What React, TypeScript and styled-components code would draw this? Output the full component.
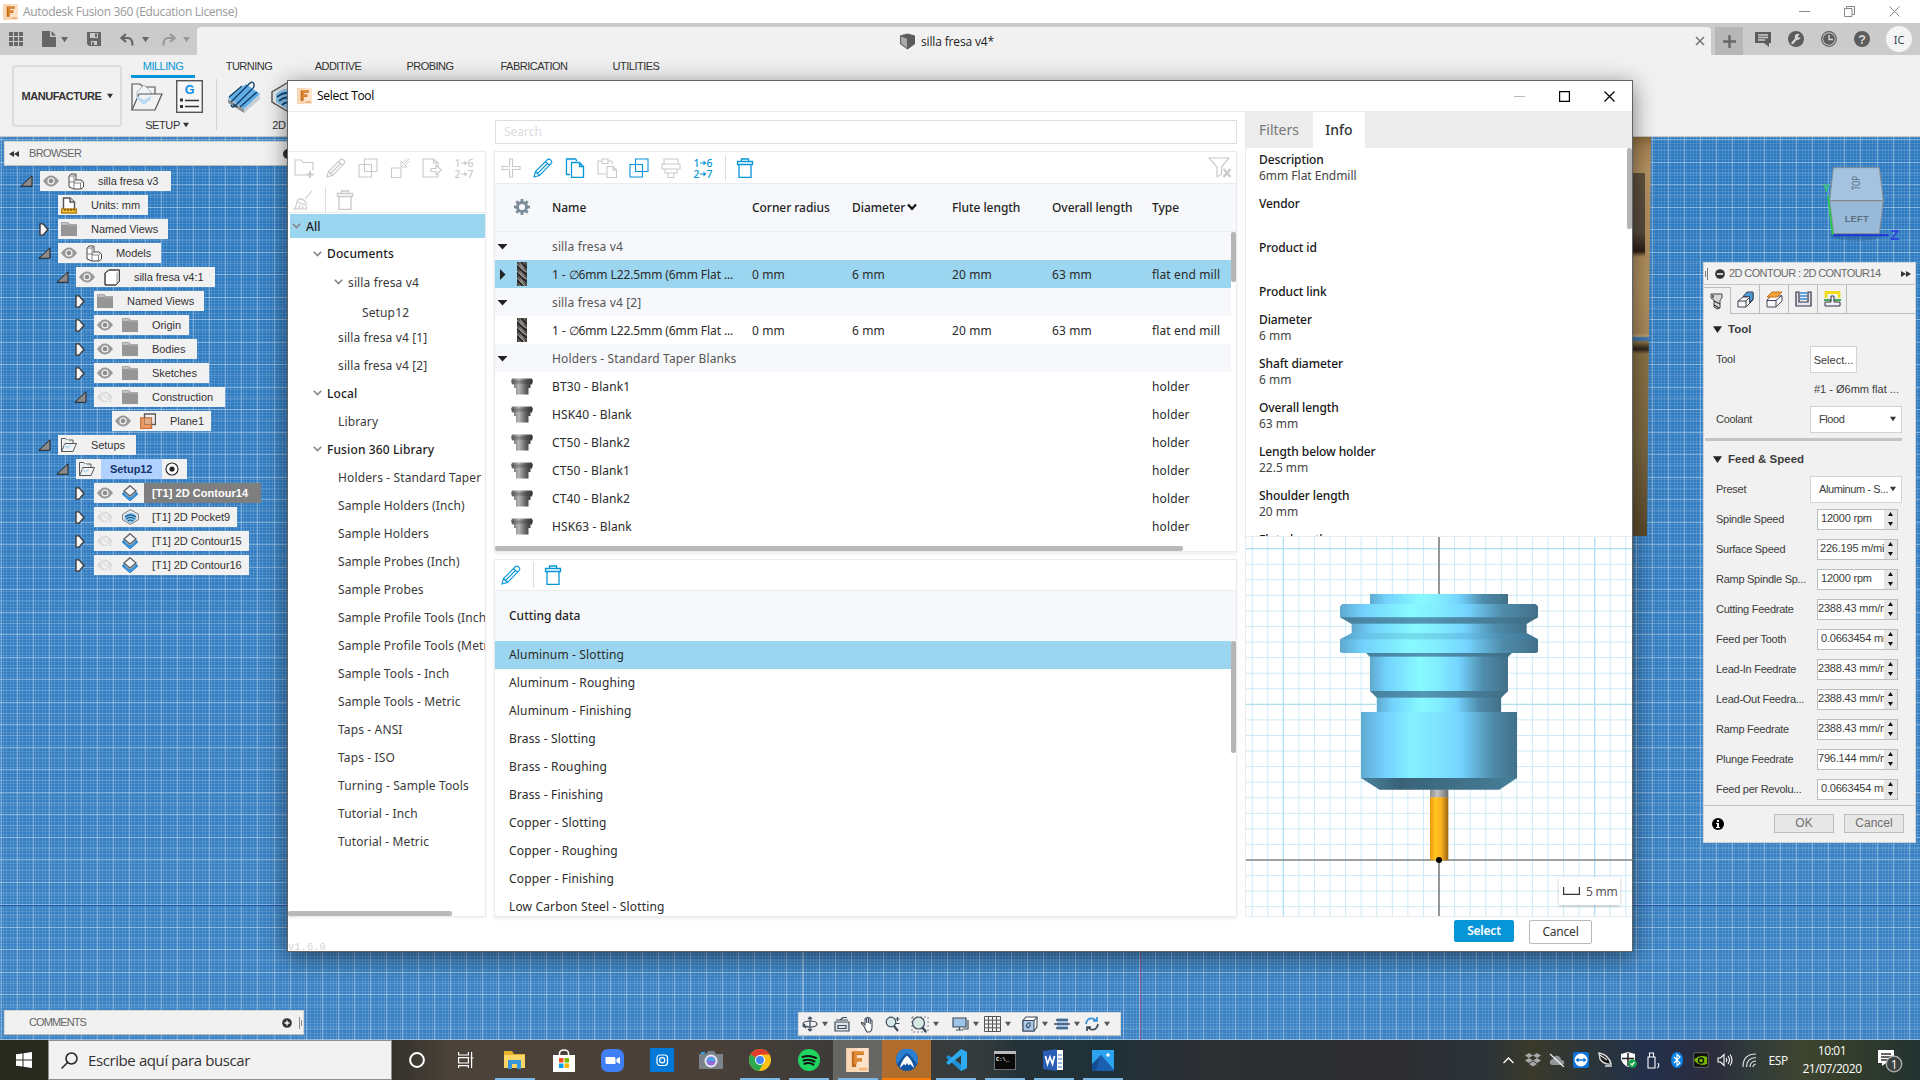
import React from "react";
import styled, { createGlobalStyle, css } from "styled-components";

const ui = `"Noto Sans", "Open Sans", sans-serif`;
const segoe = `"Open Sans", "Noto Sans", sans-serif`;
const classic = `"Liberation Sans", Arial, sans-serif`;
const blue = "#0696d7";

const Global = createGlobalStyle`
  *, *::before, *::after { box-sizing: border-box; }
  html, body { margin: 0; padding: 0; overflow: hidden; }
  svg { display: block; flex: none; }
`;

/* ------------------------------------------------------------------ */
/* Icons                                                               */
/* ------------------------------------------------------------------ */

type IconProps = {
  w?: number;
  h?: number;
  box?: string;
  stroke?: string;
  sw?: number;
  fill?: string;
  children: React.ReactNode;
};

const Icon = ({ w = 24, h = w, box, stroke = "none", sw = 1.4, fill = "none", children }: IconProps) => (
  <svg width={w} height={h} viewBox={box ?? `0 0 ${w} ${h}`} fill={fill} stroke={stroke} strokeWidth={sw}>
    {children}
  </svg>
);

const FusionLogo = ({ size = 15 }: { size?: number }) => (
  <Icon w={size} h={size + 1} box="0 0 32 34">
    <path d="M0 0H32V34H0Z" fill="#fbe2c8" />
    <path d="M0 0H16V34H0Z" fill="#f8cfa6" opacity=".6" />
    <path d="M8 5H25V10H14V14H22V19H14V27H8Z" fill="#c26a1b" />
    <path d="M11 5H25V9H15V14H22V18H15V23H11Z" fill="#e08a35" />
    <path d="M18 28H30V32H18Z" fill="#f2b47c" />
  </Icon>
);

const Caret = ({ c = "#555", s = 7 }: { c?: string; s?: number }) => (
  <Icon w={s} h={s} box="0 0 8 8" fill={c}>
    <path d="M0 1H8L4 7Z" />
  </Icon>
);

const GridDots = () => (
  <Icon w={14} fill="#666">
    {[0, 5, 10].map((y) => [0, 5, 10].map((x) => <rect key={`${x}-${y}`} x={x} y={y} width="4" height="4" />))}
  </Icon>
);
const FileIcon = () => (
  <Icon w={14} h={16} fill="#666">
    <path d="M0 0H8V6H14V16H0ZM9.500 0L14 4.500H9.500Z" />
  </Icon>
);
const SaveIcon = () => (
  <Icon w={14} fill="#666">
    <path fillRule="evenodd" d="M0 0H14V14H2L0 12ZM3 1V6H11V1ZM4 9V13H10V9ZM8 1.500H10V5H8ZM5 10H7V13H5Z" />
  </Icon>
);
const UndoIcon = ({ c, flip }: { c: string; flip?: boolean }) => (
  <Icon w={14} h={13} stroke={c} sw={2.2}>
    <g transform={flip ? "translate(14 0) scale(-1 1)" : undefined}>
      <path d="M6 1L1.500 5L6 9M2 5H8C12 5 12.500 9 12.500 12.500" />
    </g>
  </Icon>
);

const SetupFolder = ({ w = 32, h = 28 }: { w?: number; h?: number }) => (
  <Icon w={w} h={h} box="0 0 32 28" stroke="#555" sw={w > 20 ? 1.2 : 2} fill="none">
    <path d="M1 27V1H9L12 4H24V11" fill="#f4f4f4" />
    <path d="M13 2L20 9V14L13 20L6 14V9Z" fill="#f1f5f8" stroke="#8aa" strokeWidth=".8" />
    <path d="M1 27L8 11H31L24 27Z" fill="#f1f3f5" fillOpacity=".8" />
    <path d="M6 13L13 17L20 13V16L13 22L6 16Z" fill="#b9dcf4" stroke="none" />
  </Icon>
);
const PostIcon = () => (
  <Icon w={27} h={33} stroke="#555">
    <rect x=".7" y=".7" width="25.600" height="31.600" fill="#f7f7f7" />
    <text x="13.500" y="14" fontFamily={classic} fontSize="12.500" fontWeight="700" fill="#0b8ee6" stroke="none" textAnchor="middle">
      G
    </text>
    <path d="M4 18.500H7V21.500H4ZM4 25H7V28H4Z" fill="#333" stroke="none" />
    <path d="M9 20.500H23M9 26.500H23" stroke="#333" />
  </Icon>
);
const Adaptive2D = () => (
  <Icon w={32} h={32}>
    <path d="M0 18L16 28V32L0 22Z" fill="#8f9499" />
    <path d="M16 28L32 14V18L16 32Z" fill="#c9cdd1" />
    <path d="M0 17L18 3L32 13L16 28Z" fill="#62aee6" />
    <g stroke="#0d3c63" strokeWidth="1.300" fill="none">
      <path d="M3 21L20 4Q24 -1 26 3Q27 6 23 9L8 24" />
      <path d="M8 24Q4 28 3 24M12 26L29 11" />
      <path d="M1 16L14 5M5 23L9 26" />
    </g>
  </Icon>
);
const Pocket2D = ({ w = 32, h = 30 }: { w?: number; h?: number }) => (
  <Icon w={w} h={h} box="0 0 32 30" stroke="#555" sw={1.4}>
    <path d="M16 1L31 10V20L16 29L1 20V10Z" fill="#e9eaec" />
    <path d="M5 12Q16 2 27 12V20L16 27L5 20Z" fill="#8cc7ef" stroke="none" />
    <path d="M6 15Q16 7 26 15M8 19Q16 12 24 19M11 23Q16 18 21 23" stroke="#0f4c7d" strokeWidth="2" />
  </Icon>
);
const CubeDoc = () => (
  <Icon w={17} h={17}>
    <path d="M1 2.500L8.500 0.500L16 2.500V11L8.500 16.500L1 11Z" fill="#5c5c5c" />
    <path d="M2 3.600L8 5.800V15L2 10.500Z" fill="#a9a9a9" />
  </Icon>
);

/* Browser tree */
const Eye = () => (
  <Icon w={16} h={12}>
    <path d="M0 6Q8-5 16 6Q8 17 0 6Z" fill="#999" />
    <circle cx="8" cy="6" r="3.600" fill="#f1f1f1" />
    <circle cx="8" cy="6" r="2.300" fill="#8d8d8d" />
  </Icon>
);
const EyeOff = () => (
  <Icon w={16} h={12}>
    <path d="M0 6Q8-5 16 6Q8 17 0 6Z" fill="#dcdcdc" />
    <circle cx="8" cy="6" r="3.400" fill="#f1f1f1" />
    <path d="M2 0L14 12" stroke="#f1f1f1" strokeWidth="3" />
    <path d="M2.500 0L14.500 11.500" stroke="#dcdcdc" strokeWidth="1.200" />
  </Icon>
);
const FolderSolid = () => (
  <Icon w={16} h={14}>
    <path d="M0 0H7L9 2H16V4H0Z" fill="#a8a8a8" />
    <path d="M0 2.500H7L9 4H16V14H0Z" fill="#969696" />
    <path d="M1 2H7" stroke="#eee" strokeWidth=".8" />
  </Icon>
);
const Assembly = () => (
  <Icon w={16} h={17} stroke="#444" sw={1}>
    <path d="M1 3L3 1H8L8 7L13 7L15.500 9V14L13 16H6L1 14Z" fill="#fff" />
    <path d="M1 3H6V9H1M6 3L8 1M6 9V16M6 10H12.500V16M12.500 10L15 8M6 9L8 7" stroke="#777" strokeWidth=".9" />
  </Icon>
);
const BodyCube = () => (
  <Icon w={17} h={17} stroke="#444" sw={1}>
    <path d="M1 4L5 1H15.500V12L12 16H1Z" fill="#fff" />
    <path d="M12 4.500L15.500 1V12L12 16Z" fill="#c9c9c9" stroke="none" />
    <path d="M1 4L5 1H15.500V12L12 16H1Z" />
  </Icon>
);
const UnitsDoc = () => (
  <Icon w={16} h={17}>
    <path d="M2.500 12V1H9L13.500 5V12" fill="#fff" stroke="#555" />
    <path d="M9 1V5H13.500" stroke="#555" fill="#ddd" />
    <rect x=".5" y="12" width="15" height="4" fill="#f5c542" stroke="#b07c10" />
    <path d="M4 12V14M7 12V14M10 12V14M13 12V14" stroke="#805600" />
  </Icon>
);
const PlaneIcon = () => (
  <Icon w={16} h={16}>
    <rect x="4.500" y="1" width="11" height="10.500" stroke="#555" fill="#f1f1f1" />
    <rect x=".5" y="5" width="11" height="10.500" fill="#e8935a" fillOpacity=".9" stroke="#d0713a" />
    <rect x="4.500" y="5" width="7" height="6.500" fill="#e0ab86" stroke="#a66a40" strokeWidth=".7" />
  </Icon>
);
const Contour = () => (
  <Icon w={16} h={16}>
    <path d="M.5 9L8 15.500L15.500 9L8 5Z" fill="#cfe7f8" stroke="#2b87cf" />
    <path d="M.8 7.500L8 13.500L15.200 7.500" stroke="#2b87cf" />
    <path d="M8 .7L14 6L8 11L2 6Z" fill="#f7f7f7" stroke="#666" />
  </Icon>
);
const ArrowOpen = () => (
  <Icon w={13} h={12}>
    <path d="M12 .8V11.300H.8Z" fill="#8b8b8b" stroke="#222" strokeWidth="1" />
  </Icon>
);
const ArrowClosed = () => (
  <Icon w={10} h={13}>
    <path d="M1 .8L4 .8L9 6.500L4 12.200H1Z" fill="#f5f5f5" stroke="#333" strokeWidth="1.300" />
  </Icon>
);

/* Dialog toolbar, drawn on a 20 unit field */
const T = ({ c, children }: { c: string; children: React.ReactNode }) => (
  <Icon w={20} stroke={c} sw={1.1}>
    {children}
  </Icon>
);
const off = "#c9c9c9";
const TNewFolder = ({ c = off }) => (
  <T c={c}>
    <path d="M13 17H1V2H7L9 4.500H19V12" />
    <path d="M16 13V20M12.500 16.500H19.500" strokeWidth="2" />
  </T>
);
const TPencil = ({ c = off }) => (
  <T c={c}>
    <path d="M1 19L2.500 13.500L14.500 1.500Q16 .5 17.800 2.200Q19.500 4 18.300 5.500L6.500 17.500ZM2.500 13.500L6.500 17.500M12.500 3.500L16.500 7.500M4.500 15.500L14.500 5.500" />
  </T>
);
const TDup = ({ c = off }) => (
  <T c={c}>
    <path d="M6.500 1H19V13.500H6.500ZM13.500 13.500V19H1V6.500H6.500M6.500 6.500H13.500V13.500" />
  </T>
);
const TImport = ({ c = off }) => (
  <T c={c}>
    <path d="M1.500 10H11V19.500H1.500Z" />
    <path d="M19 1L14.500 5.500M17 .5L13 4.500M19.500 3L15.500 7M11 3V9H17L14 6Z" strokeWidth=".9" />
  </T>
);
const TExport = ({ c = off }) => (
  <T c={c}>
    <path d="M16 8V5L11.500 1H1V19H16V16M11.500 1V5H16M9 10.500H14V7.500L19.500 12L14 16.500V13.500H9Z" />
  </T>
);
const TRenum = ({ c = off }) => (
  <Icon w={20} h={22} box="1 0 20 22">
    <g fill={c} fontFamily={ui} fontSize="10.500" fontWeight="500">
      <text x="1.500" y="9.500">1</text>
      <text x="14.500" y="9.500">6</text>
      <text x="1.500" y="20.500">2</text>
      <text x="14.500" y="20.500">7</text>
    </g>
    <path d="M8 6H13M8 17H13" stroke={c} strokeWidth="1.200" />
    <path d="M11.500 3.500L14.500 6L11.500 8.500ZM11.500 14.500L14.500 17L11.500 19.500Z" fill={c} />
  </Icon>
);
const TBroom = ({ c = off }) => (
  <T c={c}>
    <path d="M19 1L12 9M6 9Q10 8 13 13L13.500 19H1Q3 17 3.500 14Q4 10 6 9ZM5 12L12 15M5 19Q7 17 7 15M9 19Q10 17 10 16" />
  </T>
);
const TTrash = ({ c = off }) => (
  <T c={c}>
    <path d="M4 6.500V19.500H16V6.500M2.500 3.500H17.500V6.500H2.500ZM6.500 3.500V1H13.500V3.500" strokeWidth="1.300" />
  </T>
);
const TPlus = ({ c = off }) => (
  <T c={c}>
    <path d="M8.500 1H11.500V8.500H19V11.500H11.500V19H8.500V11.500H1V8.500H8.500Z" />
  </T>
);
const TCopy = ({ c = off }) => (
  <T c={c}>
    <path d="M5 16.500H1.500V1H10.500L12 3M6.500 4.500H14.500L18.500 8.500V19.500H6.500ZM14.500 4.500V8.500H18.500" strokeWidth="1.300" />
  </T>
);
const TPaste = ({ c = off }) => (
  <T c={c}>
    <path d="M9 16H1V3H5V1H11V3H15V6M5 3V5.500H11V3M10 8.500H16L19.500 12V19.500H10ZM16 8.500V12H19.500" />
  </T>
);
const TPrint = ({ c = off }) => (
  <T c={c}>
    <path d="M3 1H17V6H3ZM1 6H19V11H1ZM4 11V15H16V11M7 15V19.500H13V15" />
  </T>
);
const TFilter = ({ c = off }) => (
  <Icon w={24} h={22} stroke={c} sw={1.2}>
    <path d="M1 1H21L13.500 10V17L9 20V10Z" />
    <path d="M15.500 12L22.500 20M22.500 12L15.500 20" strokeWidth="2.200" />
  </Icon>
);
const Gear = () => (
  <Icon w={16}>
    <circle cx="8" cy="8" r="4.600" stroke="#7c8c99" strokeWidth="3" />
    {[0, 45, 90, 135, 180, 225, 270, 315].map((a) => (
      <rect key={a} x="6.600" y="0" width="2.800" height="3" fill="#7c8c99" transform={`rotate(${a} 8 8)`} />
    ))}
  </Icon>
);
const ChevronDown = () => (
  <Icon w={9} h={6} stroke="#888" sw={1.6}>
    <path d="M.8 .8L4.500 4.600L8.200 .8" />
  </Icon>
);
const MillImage = () => (
  <Icon w={10} h={24}>
    <defs>
      <linearGradient id="mill">
        <stop offset="0" stopColor="#3a3836" />
        <stop offset=".45" stopColor="#8d8986" />
        <stop offset="1" stopColor="#44413f" />
      </linearGradient>
    </defs>
    <rect width="10" height="24" fill="url(#mill)" />
    <path d="M0 4L6 10L10 13M0 11L6 17L10 20M0 18L6 24M4 0L10 6" stroke="#292726" strokeWidth="1.900" />
    <path d="M0 2L5 7L10 10M0 9L5 14L10 17M0 16L5 21L8 24" stroke="#b3aeaa" strokeWidth=".8" />
  </Icon>
);
const HolderImage = () => (
  <Icon w={22} h={17}>
    <defs>
      <linearGradient id="hold">
        <stop offset="0" stopColor="#5a5a5a" />
        <stop offset=".35" stopColor="#b5b5b5" />
        <stop offset=".7" stopColor="#5b5b5b" />
        <stop offset="1" stopColor="#333" />
      </linearGradient>
    </defs>
    <path d="M1 .5H21L21.500 2.500H22L21 6.500H19.500V10H17.500V16.500H5V10H3V6.500H1L0 2.500H.5Z" fill="url(#hold)" />
    <path d="M1 3.200H21M1 5H21" stroke="#333" strokeOpacity=".7" strokeWidth=".7" />
  </Icon>
);

/* ------------------------------------------------------------------ */
/* Application frame                                                   */
/* ------------------------------------------------------------------ */

const Screen = styled.div`
  position: relative;
  display: flex;
  flex-direction: column;
  width: 1920px;
  height: 1080px;
  overflow: hidden;
  background: #f1f1f1;
  font: 12px ${ui};
  color: #333;
  white-space: nowrap;
`;

const TitleBar = styled.header`
  display: flex;
  align-items: center;
  flex: none;
  height: 23px;
  padding-left: 3px;
  background: #fff;
`;
const AppTitle = styled.span`
  flex: 1;
  margin-left: 5px;
  color: #999;
  font: 12px/22px ${segoe};
  letter-spacing: -0.32px;
`;
const WindowButtons = styled.div<{ $pad: number }>`
  display: flex;
  align-items: center;
  gap: 34px;
  padding-right: ${(p) => p.$pad}px;
`;

const TabStrip = styled.div`
  display: flex;
  flex: none;
  height: 32px;
  background: #cbcbcb;
`;
const QuickTools = styled.div`
  display: flex;
  align-items: center;
  width: 197px;
  padding-left: 9px;
`;
const Spacer = styled.i<{ $w: number }>`
  flex: none;
  width: ${(p) => p.$w}px;
`;
const DocTab = styled.div`
  display: flex;
  align-items: center;
  width: 1514px;
  margin-top: 4px;
  padding: 0 6px 0 702px;
  gap: 5px;
  background: #f1f1f1;
  border-radius: 4px 4px 0 0;
  color: #222;
  font: 12px ${segoe};
  letter-spacing: -0.15px;

  span { flex: 1; }
`;
const NewTab = styled.div`
  display: grid;
  place-items: center;
  width: 28px;
  margin: 4px 8px 0 4px;
  background: #b7b7b7;
`;
const AccountTools = styled.div`
  display: flex;
  align-items: center;

  > * { width: 33px; display: grid; place-items: center; }
  > :first-child { width: 24px; margin-right: 4px; }
`;
const Avatar = styled.b`
  && { width: 26px; }
  height: 26px;
  margin: 0 0 0 8px;
  border-radius: 50%;
  background: #f4f4f4;
  color: #345;
  font: 11px ${ui};
`;

const Ribbon = styled.div`
  display: flex;
  flex: none;
  height: 82px;
  padding: 0 0 0 12px;
  background: #f1f1f1;
  border-bottom: 1px solid #c9c9c9;
`;
const Workspace = styled.div`
  display: flex;
  align-items: center;
  justify-content: center;
  gap: 5px;
  width: 110px;
  height: 62px;
  margin-top: 10px;
  border: 2px solid #dcdcdc;
  border-radius: 4px;
  font: 700 11px ${classic};
  letter-spacing: -0.45px;
  color: #333;
`;
const RibbonBody = styled.div`
  display: flex;
  flex-direction: column;
  margin-left: 9px;
`;
const RibbonTabs = styled.nav`
  display: flex;
  height: 25px;
`;
const RibbonTab = styled.a<{ $w: number; $on?: boolean }>`
  width: ${(p) => p.$w}px;
  padding-top: 4px;
  text-align: center;
  font: 11px/14px ${classic};
  letter-spacing: -0.5px;
  color: ${(p) => (p.$on ? blue : "#333")};
  border-bottom: 3px solid ${(p) => (p.$on ? blue : "transparent")};
`;
const RibbonGroups = styled.div`
  display: flex;
  padding-top: 1px;
`;
const RibbonGroup = styled.div<{ $w: number; $gap: number }>`
  display: flex;
  flex-direction: column;
  align-items: center;
  width: ${(p) => p.$w}px;

  > :first-child { gap: ${(p) => p.$gap}px; }
`;
const RibbonIcons = styled.div`
  display: flex;
  align-items: center;
  height: 35px;
`;
const RibbonLabel = styled.span`
  display: flex;
  align-items: center;
  gap: 3px;
  height: 22px;
  font: 11px/14px ${classic};
  letter-spacing: -0.4px;
`;
const RibbonRule = styled.i`
  width: 1px;
  height: 51px;
  margin: 0 11px 0 13px;
  background: #d2d2d2;
`;

/* ------------------------------------------------------------------ */
/* Viewport                                                            */
/* ------------------------------------------------------------------ */

const Viewport = styled.main`
  position: relative;
  flex: 1;
  overflow: hidden;
  background:
    linear-gradient(#1d55b8, #1d55b8) 0 768px / 100% 1px no-repeat,
    repeating-linear-gradient(90deg, rgba(255,255,255,.32) 0 1px, transparent 1px 16.03px) 1px 0,
    repeating-linear-gradient(0deg, rgba(255,255,255,.24) 0 1px, transparent 1px 22.5px),
    repeating-linear-gradient(0deg, rgba(255,255,255,.14) 0 1px, transparent 1px 11.25px),
    repeating-linear-gradient(90deg, rgba(255,255,255,.11) 0 1px, transparent 1px 3.2px),
    repeating-linear-gradient(0deg, rgba(255,255,255,.11) 0 1px, transparent 1px 3.2px),
    linear-gradient(#2d7ac0, #3a82c4);
`;
const Photo = styled.div`
  position: absolute;
  left: 1600px;
  top: 0;
  width: 51px;
  height: 399px;
  background:
    linear-gradient(#61533e 0, #584b3d 60px, #2d1d16 78px, rgba(60, 40, 25, 0) 84px) 0 36px / 45px 84px no-repeat,
    linear-gradient(
      #8b6a3c 0, #a88455 12px, #b79565 34px, #b08e5e 110px, #b39261 150px,
      #a98a5a 196px, #c0a475 199px, #3d79b3 201px, #3d79b3 203px, #8c7347 205px, #2b2118 212px, #8c7347 217px,
      #7e6a43 300px, #5d4b2c 399px
    );
  clip-path: polygon(0 0, 100% 0, 92% 100%, 0 100%);
`;
const RedAxis = styled.i`
  position: absolute;
  left: 1140px;
  top: 810px;
  width: 1px;
  height: 93px;
  background: #8b5a8e;
`;
const FloatBar = styled.div<{ $x: number; $y: number; $w: number; $h?: number }>`
  position: absolute;
  left: ${(p) => p.$x}px;
  top: ${(p) => p.$y}px;
  display: flex;
  align-items: center;
  width: ${(p) => p.$w}px;
  height: ${(p) => p.$h ?? 25}px;
  background: #f1f1f1;
  border: 1px solid #d4d4d4;
  border-bottom-color: #bbb;
  color: #666;
  font: 11px ${classic};
`;
const BarLabel = styled.span<{ $ls?: number }>`
  flex: 1;
  padding-bottom: 1px;
  letter-spacing: ${(p) => p.$ls ?? -0.2}px;
`;
const Tree = styled.ul`
  position: absolute;
  left: 16px;
  top: 34px;
  margin: 0;
  padding: 0;
  display: flex;
  flex-direction: column;
  gap: 4px;
  list-style: none;
`;
const TreeRow = styled.li<{ $depth: number }>`
  display: flex;
  height: 20px;
  padding-left: ${(p) => p.$depth * 18}px;
`;
const TreeArrow = styled.span`
  display: grid;
  place-items: center;
  width: 24px;
  padding-right: 4px;
`;
const TreeBox = styled.span<{ $w: number }>`
  display: flex;
  align-items: center;
  width: ${(p) => p.$w}px;
  background: #f1f1f1;
  font: 11px/20px ${classic};
  color: #333;
`;
const TreeCell = styled.span`
  display: grid;
  place-items: center;
  width: 22px;

  & + & { margin-left: 3px; }
`;
const TreeText = styled.span<{ $tone?: "edit" | "active" }>`
  padding-left: 11px;
  letter-spacing: -0.05px;
  ${(p) =>
    p.$tone === "edit" &&
    css`
      width: 61px;
      margin: 0 3px;
      padding-left: 9px;
      font-weight: 700;
      color: #17346b;
      background: #b1d1ff;
    `}
  ${(p) =>
    p.$tone === "active" &&
    css`
      flex: 1;
      margin-left: 3px;
      padding-left: 8px;
      font-weight: 700;
      letter-spacing: 0.05px;
      color: #fff;
      background: #7f7f7f;
    `}
`;

type Node = {
  d: number;
  w: number;
  t: string;
  open?: boolean;
  leaf?: boolean;
  eye?: "on" | "off";
  icon: React.ReactNode;
  tone?: "edit" | "active";
};
const nodes: Node[] = [
  { d: 0, w: 131, t: "silla fresa v3", open: true, eye: "on", icon: <Assembly /> },
  { d: 1, w: 90, t: "Units: mm", leaf: true, icon: <UnitsDoc /> },
  { d: 1, w: 110, t: "Named Views", icon: <FolderSolid /> },
  { d: 1, w: 103, t: "Models", open: true, eye: "on", icon: <Assembly /> },
  { d: 2, w: 139, t: "silla fresa v4:1", open: true, eye: "on", icon: <BodyCube /> },
  { d: 3, w: 110, t: "Named Views", icon: <FolderSolid /> },
  { d: 3, w: 95, t: "Origin", eye: "on", icon: <FolderSolid /> },
  { d: 3, w: 103, t: "Bodies", eye: "on", icon: <FolderSolid /> },
  { d: 3, w: 115, t: "Sketches", eye: "on", icon: <FolderSolid /> },
  { d: 3, w: 131, t: "Construction", open: true, eye: "off", icon: <FolderSolid /> },
  { d: 4, w: 99, t: "Plane1", leaf: true, eye: "on", icon: <PlaneIcon /> },
  { d: 1, w: 78, t: "Setups", open: true, icon: <SetupFolder w={16} h={14} /> },
  { d: 2, w: 111, t: "Setup12", open: true, icon: <SetupFolder w={16} h={14} />, tone: "edit" },
  { d: 3, w: 167, t: "[T1] 2D Contour14", eye: "on", icon: <Contour />, tone: "active" },
  { d: 3, w: 143, t: "[T1] 2D Pocket9", eye: "off", icon: <Pocket2D w={17} h={16} /> },
  { d: 3, w: 155, t: "[T1] 2D Contour15", eye: "off", icon: <Contour /> },
  { d: 3, w: 155, t: "[T1] 2D Contour16", eye: "off", icon: <Contour /> },
];

const BrowserTree = () => (
  <Tree>
    {nodes.map((n, i) => (
      <TreeRow key={i} $depth={n.d}>
        <TreeArrow>{!n.leaf && (n.open ? <ArrowOpen /> : <ArrowClosed />)}</TreeArrow>
        <TreeBox $w={n.w}>
          {n.eye && <TreeCell>{n.eye === "on" ? <Eye /> : <EyeOff />}</TreeCell>}
          <TreeCell>{n.icon}</TreeCell>
          <TreeText $tone={n.tone}>{n.t}</TreeText>
          {n.tone === "edit" && (
            <Icon w={14}>
              <circle cx="7" cy="7" r="6" stroke="#333" strokeWidth="1.200" fill="#fff" />
              <circle cx="7" cy="7" r="2.600" fill="#222" />
            </Icon>
          )}
        </TreeBox>
      </TreeRow>
    ))}
  </Tree>
);

const CubeHolder = styled.div`
  position: absolute;
  left: 1818px;
  top: 24px;
`;
const ViewCube = () => (
  <CubeHolder>
    <svg width="90" height="90" viewBox="534 92 270 270">
      <ellipse cx="650" cy="315" rx="80" ry="16" fill="#1b4f86" opacity=".35" />
      <path d="M580 112H718L730 211H569Z" fill="#a3c3e0" stroke="#8a8f95" strokeWidth="3" />
      <path d="M569 211H730L718 310H581Z" fill="#98b9d8" stroke="#8a8f95" strokeWidth="3" />
      <path d="M569 211H730" stroke="#808890" strokeWidth="3" />
      <path d="M564 196L578 314" stroke="#27d04a" strokeWidth="5" />
      <path d="M580 315H746" stroke="#1b37d6" strokeWidth="6" />
      <g fontFamily={classic} fontWeight="700">
        <text x="650" y="276" textAnchor="middle" fontSize="28" fill="#5b7083" textLength="72">LEFT</text>
        <text transform="translate(661 158) rotate(-90)" textAnchor="middle" fontSize="32" fontWeight="400" fill="#5b7083" textLength="42" lengthAdjust="spacingAndGlyphs">TOP</text>
        <text x="549" y="186" fontSize="34" fontWeight="700" fill="#2fcf6a" textLength="20" lengthAdjust="spacingAndGlyphs">Y</text>
        <text x="751" y="329" fontSize="44" fill="#2c45e0" fontWeight="700">Z</text>
      </g>
    </svg>
  </CubeHolder>
);

/* Navigation bar */
const NavCell = styled.span<{ $w: number }>`
  display: flex;
  align-items: center;
  gap: 4px;
  width: ${(p) => p.$w}px;
`;
const nk = "#3d4a5a";
const NavBar = () => (
  <FloatBar $x={798} $y={875} $w={323} $h={24}>
    <Spacer $w={3} />
    <NavCell $w={32}>
      <Icon w={16} stroke={nk} sw={1.2}>
        <path d="M8 1V15M6 3L8 1L10 3M6 13L8 15L10 13" />
        <ellipse cx="8" cy="8" rx="7" ry="3" />
        <path d="M3 8L1 10L4 12" />
      </Icon>
      <Caret s={6} />
    </NavCell>
    <NavCell $w={26}>
      <Icon w={17} h={16} stroke={nk} sw={1.2}>
        <path d="M1 6H15V15H1Z" fill="#dfe4ea" />
        <path d="M4 9.500H12V12.500H4ZM2 4H14M6 4L9 1.500H13" />
      </Icon>
    </NavCell>
    <NavCell $w={25}>
      <Icon w={16} h={17} stroke={nk} sw={1.1}>
        <path d="M4.500 11L1.500 7.500Q1 6 2.500 6.500L5 9V3Q5.800 1.800 6.600 3V7V2Q7.500 .6 8.400 2V7V2.500Q9.300 1.300 10.200 2.500V8V4.500Q11.200 3.500 12 4.500V11Q12 15 9.500 16H7Q5.500 14 4.500 11Z" fill="#fff" />
      </Icon>
    </NavCell>
    <NavCell $w={26}>
      <Icon w={17} h={16} stroke={nk} sw={1.2}>
        <circle cx="6" cy="6" r="4.800" fill="#d5e8ea" />
        <path d="M9 10L13 15" strokeWidth="2.200" />
        <path d="M12.500 1V5M10.500 3H14.500M11 7.500H14.500" />
      </Icon>
    </NavCell>
    <NavCell $w={41}>
      <Icon w={18} h={17} stroke={nk} sw={1.2}>
        <path d="M1 1H17V16H1Z" strokeDasharray="2 2" stroke="#777" strokeWidth=".9" />
        <circle cx="7.500" cy="7" r="6" fill="#d5e8e0" />
        <path d="M11.500 11.500L15 16" strokeWidth="2.400" />
      </Icon>
      <Caret s={6} />
    </NavCell>
    <NavCell $w={32}>
      <Icon w={17} h={15} stroke={nk} sw={1.2}>
        <path d="M1 1H14V10H1Z" fill="#9cc3e8" />
        <path d="M4 13H11M7.500 10V13M16 3V12H11" />
      </Icon>
      <Caret s={6} />
    </NavCell>
    <NavCell $w={38}>
      <Icon w={17} h={16} stroke="#555" sw={1}>
        <path d="M.5 .5H16.500V15.500H.5ZM.5 4.200H16.500M.5 8H16.500M.5 11.800H16.500M4.500 .5V15.500M8.500 .5V15.500M12.500 .5V15.500" />
      </Icon>
      <Caret s={6} />
    </NavCell>
    <NavCell $w={32}>
      <Icon w={16} h={16} stroke={nk} sw={1.1}>
        <path d="M1 4.500L4 1H15V11L12 15H1Z" fill="#fff" />
        <path d="M1 4.500H12V15H1Z" fill="#a9c9ea" />
        <path d="M12 4.500L15 1M4 10L6 7H8V10L6 12Z" />
      </Icon>
      <Caret s={6} />
    </NavCell>
    <NavCell $w={30}>
      <Icon w={16} h={14} stroke={nk} sw={1.6}>
        <path d="M3 1H14V13H3Z" fill="#9cc3e8" stroke="none" />
        <path d="M2 3H14M0 7H16M2 11H14" />
      </Icon>
      <Caret s={6} />
    </NavCell>
    <NavCell $w={28}>
      <Icon w={16} h={16} stroke="#2f8fd8" sw={1.7}>
        <path d="M2 8Q3 1.500 9 2.500L13 5M13 1V5H9" />
        <path d="M14 8Q13 14.500 7 13.500L3 11M3 15V11H7" stroke={nk} />
      </Icon>
      <Caret s={6} />
    </NavCell>
  </FloatBar>
);

/* ------------------------------------------------------------------ */
/* Operation panel                                                     */
/* ------------------------------------------------------------------ */

const Panel = styled.aside`
  position: absolute;
  left: 1703px;
  top: 125px;
  display: flex;
  flex-direction: column;
  width: 213px;
  height: 581px;
  background: #f1f1f1;
  border: 1px solid #cfd3d8;
  font: 11px ${classic};
  color: #3c3c3c;
`;
const PanelHead = styled.div`
  display: flex;
  align-items: center;
  height: 22px;
  padding-left: 1px;
  gap: 4px;
  color: #6a6a6a;
  border-bottom: 1px solid #c4c4c4;
`;
const PanelTabs = styled.div`
  display: flex;
  height: 29px;
`;
const PanelTab = styled.span<{ $on?: boolean }>`
  display: grid;
  place-items: center;
  width: ${(p) => (p.$on ? 27 : 29)}px;
  margin-top: ${(p) => (p.$on ? 2 : 0)}px;
  border-right: 1px solid #bbb;
  border-top: ${(p) => (p.$on ? "1px solid #bbb" : "0")};
  border-bottom: ${(p) => (p.$on ? "0" : "1px solid #bbb")};
`;
const PanelTabsRest = styled.span`
  flex: 1;
  border-bottom: 1px solid #bbb;
`;
const Section = styled.div`
  display: flex;
  align-items: center;
  gap: 6px;
  height: 30px;
  padding-left: 9px;
  font-weight: 700;
  font-size: 11.5px;
`;
const Field = styled.div`
  display: flex;
  align-items: center;
  height: 30px;
  padding-left: 12px;
`;
const FieldLabel = styled.span`
  width: 94px;
  letter-spacing: -0.27px;
`;
const FlatButton = styled.span`
  width: 47px;
  height: 27px;
  border: 1px solid #d3d3d3;
  background: #fff;
  text-align: center;
  line-height: 26px;
`;
const Select = styled.span`
  display: flex;
  align-items: center;
  justify-content: space-between;
  width: 92px;
  height: 27px;
  padding: 0 5px 0 8px;
  border: 1px solid #d3d3d3;
  background: #fff;
  letter-spacing: -0.4px;
`;
const Rule = styled.i`
  width: 197px;
  height: 3px;
  margin: 4px 0 3px 1px;
  background: #c4c4c4;
`;
const Spin = styled.span`
  display: flex;
  width: 81px;
  height: 21px;
  margin-left: 7px;
  border: 1px solid #bdbdbd;
  background: #fff;
`;
const SpinValue = styled.span<{ $pad: number }>`
  width: 66px;
  padding-left: ${(p) => p.$pad}px;
  overflow: hidden;
  line-height: 17px;
  letter-spacing: -0.2px;
`;
const SpinButtons = styled.span`
  display: flex;
  flex: 1;
  flex-direction: column;
  align-items: center;
  justify-content: space-around;
  background: #e6e6e6;
`;
const PanelFoot = styled.div`
  display: flex;
  align-items: center;
  gap: 10px;
  height: 36px;
  margin-top: 1px;
  padding-left: 8px;
  border-top: 1px solid #c4c4c4;
`;
const ClassicButton = styled.span`
  width: 60px;
  height: 19px;
  border: 1px solid #bdbdbd;
  background: #e7e7e7;
  color: #6f6f6f;
  text-align: center;
  font: 12px/17px ${classic};
`;

const feeds: [string, string, number][] = [
  ["Spindle Speed", "12000 rpm", 3],
  ["Surface Speed", "226.195 m/min", 2],
  ["Ramp Spindle Sp...", "12000 rpm", 3],
  ["Cutting Feedrate", "2388.43 mm/min", 0],
  ["Feed per Tooth", "0.0663454 mm", 3],
  ["Lead-In Feedrate", "2388.43 mm/min", 0],
  ["Lead-Out Feedra...", "2388.43 mm/min", 0],
  ["Ramp Feedrate", "2388.43 mm/min", 0],
  ["Plunge Feedrate", "796.144 mm/min", 0],
  ["Feed per Revolu...", "0.0663454 mm", 3],
];

const OperationPanel = () => (
  <Panel>
    <PanelHead>
      <Icon w={6} h={12} stroke="#777" sw={1}>
        <path d="M.5 3V9M2.500 0V12" />
      </Icon>
      <Icon w={10}>
        <circle cx="5" cy="5" r="4.800" fill="#333" />
        <path d="M2 5H8" stroke="#fff" strokeWidth="1.500" />
      </Icon>
      <BarLabel $ls={-0.6}>2D CONTOUR : 2D CONTOUR14</BarLabel>
      <Icon w={10} h={8} fill="#333">
        <path d="M0 1L5 4L0 7ZM5 1L10 4L5 7Z" />
      </Icon>
      <Spacer $w={0} />
    </PanelHead>
    <PanelTabs>
      <PanelTab $on>
        <Icon w={14} h={17} stroke="#444" sw={1}>
          <path d="M1 1H12V5L10 7V15L7 16L4 14V7L1 5Z" fill="#d7d7d7" />
          <path d="M4 8L10 11M4 12L9 15M3 2V5" stroke="#333" strokeWidth="1.300" />
        </Icon>
      </PanelTab>
      <PanelTab>
        <Icon w={17} h={17} stroke="#445" sw={1}>
          <path d="M1 10L6 6H11L16 2V9L9 16H1Z" fill="#f6f6f6" />
          <path d="M6 5.500L10 1H16V8L12.500 11.500V5.500Z" fill="#4b9ad8" />
          <path d="M1 10H9V16M9 10L12 7" />
        </Icon>
      </PanelTab>
      <PanelTab>
        <Icon w={17} h={17} stroke="#445" sw={1}>
          <path d="M1 9L5 5H16V10L10 16H1Z" fill="#f6f6f6" />
          <path d="M1 6L6 1H16L11 6Z" fill="#f5a23a" stroke="#c77414" />
          <path d="M1 9.500H10V16M10 9.500L16 4" />
        </Icon>
      </PanelTab>
      <PanelTab>
        <Icon w={17} h={16} stroke="#334" sw={1.2}>
          <path d="M1 1H4V11H13V1H16V15H1Z" fill="#e2e4ee" />
          <path d="M5 2H12M5 5H12M5 8H12" stroke="#2f86d0" strokeWidth="1.500" />
        </Icon>
      </PanelTab>
      <PanelTab>
        <Icon w={17} h={16} sw={1}>
          <path d="M2 7V1.500H15V7" stroke="#f1dc1c" strokeWidth="2.800" />
          <path d="M0 9H17" stroke="#35a045" strokeWidth="1.800" />
          <path d="M7 5H10V11H16V15H1V11H7Z" fill="#eef" stroke="#334" />
        </Icon>
      </PanelTab>
      <PanelTabsRest />
    </PanelTabs>
    <Section>
      <Caret c="#222" s={9} />
      Tool
    </Section>
    <Field>
      <FieldLabel>Tool</FieldLabel>
      <FlatButton>Select...</FlatButton>
    </Field>
    <Field>
      <FieldLabel />
      <Spacer $w={4} />
      #1 - Ø6mm flat ...
    </Field>
    <Field>
      <FieldLabel>Coolant</FieldLabel>
      <Select>
        Flood
        <Caret c="#333" s={6} />
      </Select>
    </Field>
    <Rule />
    <Section>
      <Caret c="#222" s={9} />
      Feed &amp; Speed
    </Section>
    <Field>
      <FieldLabel>Preset</FieldLabel>
      <Select>
        Aluminum - S...
        <Caret c="#333" s={6} />
      </Select>
    </Field>
    {feeds.map(([label, value, pad]) => (
      <Field key={label}>
        <FieldLabel>{label}</FieldLabel>
        <Spin>
          <SpinValue $pad={pad}>{value}</SpinValue>
          <SpinButtons>
            <Icon w={5} h={4} fill="#111"><path d="M2.500 0L5 4H0Z" /></Icon>
            <Icon w={5} h={4} fill="#111"><path d="M0 0H5L2.500 4Z" /></Icon>
          </SpinButtons>
        </Spin>
      </Field>
    ))}
    <PanelFoot>
      <Icon w={12}>
        <circle cx="6" cy="6" r="6" fill="#000" />
        <path d="M5 2H7V4H5ZM4 5H7V9H8V10H4V9H5V6H4Z" fill="#fff" />
      </Icon>
      <Spacer $w={30} />
      <ClassicButton>OK</ClassicButton>
      <ClassicButton>Cancel</ClassicButton>
    </PanelFoot>
  </Panel>
);

/* ------------------------------------------------------------------ */
/* Select Tool dialog                                                  */
/* ------------------------------------------------------------------ */

const Dialog = styled.section`
  position: absolute;
  left: 287px;
  top: 80px;
  display: flex;
  flex-direction: column;
  width: 1346px;
  height: 872px;
  background: #fff;
  border: 1px solid #5f6468;
  box-shadow: 0 5px 22px rgba(0, 0, 0, 0.5);
  color: #2b2b2b;
`;
const DialogTitle = styled.div`
  display: flex;
  align-items: center;
  flex: none;
  height: 31px;
  padding-left: 9px;
  border-bottom: 1px solid #ebebeb;

  span {
    flex: 1;
    margin-left: 5px;
    color: #000;
    font: 12px/28px ${segoe};
    letter-spacing: -0.3px;
  }
`;
const DialogBody = styled.div`
  display: flex;
  flex: 1;
  min-height: 0;
`;
const Library = styled.div`
  display: flex;
  flex-direction: column;
  width: 198px;
  margin-top: 39px;
  border: solid #e9ebee;
  border-width: 1px 1px 1px 0;
  height: 766px;
  overflow: hidden;
  box-shadow: 0 1px 2px rgba(0, 0, 0, 0.06);
  letter-spacing: 0.13px;
`;
const LibTools = styled.div`
  display: grid;
  grid-template-columns: repeat(6, 32px);
  grid-auto-rows: 32px;
  place-items: center;
  height: 61px;
  margin-bottom: 1px;
  border-bottom: 1px solid #e9ebee;
`;
const ToolSep = styled.i`
  width: 1px;
  height: 26px;
  margin-right: -3px;
  background: #ddd;
`;
const LibSecondRow = styled.div`
  grid-column: 1 / -1;
  justify-self: start;
  display: flex;
  align-items: center;
  gap: 12px;
  padding-left: 5px;
`;
const LibRow = styled.div<{ $x: number; $on?: boolean; $bold?: boolean; $h?: number; $drop?: number }>`
  display: flex;
  align-items: center;
  gap: 5px;
  flex: none;
  height: ${(p) => p.$h ?? 28}px;
  margin-left: 2px;
  padding: ${(p) => p.$drop ?? 0}px 0 0 ${(p) => p.$x - 2}px;
  overflow: hidden;
  background: ${(p) => (p.$on ? "#9bd5ef" : "transparent")};
  color: ${(p) => (p.$bold ? "#1d1d1d" : "#3a3a3a")};
  font: ${(p) => (p.$bold ? 500 : 400)} 12px ${ui};
`;
const HScroll = styled.i<{ $w: number }>`
  flex: none;
  width: ${(p) => p.$w}px;
  height: 5px;
  margin-top: auto;
  border-radius: 2px;
  background: #b9b9b9;
`;

const library: { t: string; x: number; chev?: boolean; bold?: boolean; on?: boolean; h?: number; drop?: number }[] = [
  { t: "All", x: 4, chev: true, bold: true, on: true, h: 24 },
  { t: "Documents", x: 25, chev: true, bold: true, h: 31 },
  { t: "silla fresa v4", x: 46, chev: true, h: 26 },
  { t: "Setup12", x: 74, h: 28, drop: 7 },
  { t: "silla fresa v4 [1]", x: 50 },
  { t: "silla fresa v4 [2]", x: 50 },
  { t: "Local", x: 25, chev: true, bold: true },
  { t: "Library", x: 50 },
  { t: "Fusion 360 Library", x: 25, chev: true, bold: true },
  ...[
    "Holders - Standard Taper Blanks",
    "Sample Holders (Inch)",
    "Sample Holders",
    "Sample Probes (Inch)",
    "Sample Probes",
    "Sample Profile Tools (Inch)",
    "Sample Profile Tools (Metric)",
    "Sample Tools - Inch",
    "Sample Tools - Metric",
    "Taps - ANSI",
    "Taps - ISO",
    "Turning - Sample Tools",
    "Tutorial - Inch",
    "Tutorial - Metric",
  ].map((t) => ({ t, x: 50 })),
];

const Center = styled.div`
  display: flex;
  flex-direction: column;
  width: 743px;
  margin-left: 8px;
  padding-top: 8px;
`;
const Search = styled.div`
  flex: none;
  width: 742px;
  height: 24px;
  margin-left: 1px;
  padding-left: 8px;
  border: 1px solid #dedede;
  color: #dcdcdc;
  font: 12px/22px ${ui};
`;
const Card = styled.div<{ $h: number; $top: number }>`
  display: flex;
  flex-direction: column;
  flex: none;
  height: ${(p) => p.$h}px;
  margin-top: ${(p) => p.$top}px;
  border: 1px solid #e9ebee;
  box-shadow: 0 2px 3px rgba(60, 100, 130, 0.1);
  overflow: hidden;
`;
const CardTools = styled.div<{ $h: number }>`
  display: flex;
  align-items: center;
  gap: 12px;
  flex: none;
  height: ${(p) => p.$h}px;
  padding: 0 4px 0 6px;
  border-bottom: 1px solid #e9ebee;

  > :last-child.push { margin-left: auto; }
`;
const columns = "57px 200px 100px 100px 100px 100px 1fr";
const HeadRow = styled.div`
  display: grid;
  grid-template-columns: ${columns};
  align-items: center;
  flex: none;
  height: 48px;
  padding-bottom: 1px;
  background: #f7f8fb;
  border-bottom: 1px solid #eceef0;
  color: #1f1f1f;
  font: 500 12px ${ui};
  letter-spacing: -0.05px;

  > :first-child { margin-left: 19px; }
`;
const ScrollArea = styled.div`
  display: flex;
  flex: 1;
  min-height: 0;
  overflow: hidden;
`;
const Rows = styled.div`
  flex: 1;
  overflow: hidden;
  letter-spacing: 0.15px;
`;
const VThumb = styled.i<{ $h: number }>`
  flex: none;
  width: 5px;
  height: ${(p) => p.$h}px;
  border-radius: 2px;
  background: #b5b5b5;
`;
const Lead = styled.span`
  display: grid;
  grid-template-columns: 15px 24px;
  place-items: center;
`;
const Row = styled.div<{ $kind?: "group" | "on" }>`
  display: grid;
  grid-template-columns: ${columns};
  align-items: center;
  height: 28px;
  color: ${(p) => (p.$kind === "group" ? "#555" : "#2b2b2b")};
  background: ${(p) => (p.$kind === "group" ? "#f7f8fb" : p.$kind === "on" ? "#9bd5ef" : "#fff")};
`;
const Cell = styled.span<{ $tight?: boolean }>`
  letter-spacing: ${(p) => (p.$tight ? -0.1 : 0.13)}px;
`;
const DataHead = styled.div`
  flex: none;
  height: 50px;
  padding-left: 14px;
  background: #f7f8fb;
  color: #1f1f1f;
  font: 500 12px/50px ${ui};
`;
const DataRow = styled.div<{ $on?: boolean }>`
  height: 28px;
  padding-left: 14px;
  line-height: 28px;
  background: ${(p) => (p.$on ? "#9bd5ef" : "#fff")};
`;
const Rise = styled.span`
  display: inline-flex;
  align-items: center;
  gap: 2px;
`;
const GroupTri = ({ right }: { right?: boolean }) => (
  <Icon w={9} h={11} box="0 0 9 11" fill="#222">
    {right ? <path d="M2 0L7.500 5.500L2 11Z" /> : <path d="M-.5 3H9.500L4.500 8.500Z" />}
  </Icon>
);

const tools: { kind?: "group" | "on"; lead: React.ReactNode; img?: React.ReactNode; c: string[] }[] = [
  { kind: "group", lead: <GroupTri />, c: ["silla fresa v4"] },
  { kind: "on", lead: <GroupTri right />, img: <MillImage />, c: ["1 - ∅6mm L22.5mm (6mm Flat ...", "0 mm", "6 mm", "20 mm", "63 mm", "flat end mill"] },
  { kind: "group", lead: <GroupTri />, c: ["silla fresa v4 [2]"] },
  { lead: null, img: <MillImage />, c: ["1 - ∅6mm L22.5mm (6mm Flat ...", "0 mm", "6 mm", "20 mm", "63 mm", "flat end mill"] },
  { kind: "group", lead: <GroupTri />, c: ["Holders - Standard Taper Blanks"] },
  ...["BT30 - Blank1", "HSK40 - Blank", "CT50 - Blank2", "CT50 - Blank1", "CT40 - Blank2", "HSK63 - Blank"].map((n) => ({
    lead: null,
    img: <HolderImage />,
    c: [n, "", "", "", "", "holder"],
  })),
];
const cutting = [
  "Aluminum - Slotting",
  "Aluminum - Roughing",
  "Aluminum - Finishing",
  "Brass - Slotting",
  "Brass - Roughing",
  "Brass - Finishing",
  "Copper - Slotting",
  "Copper - Roughing",
  "Copper - Finishing",
  "Low Carbon Steel - Slotting",
];

const Side = styled.div`
  display: flex;
  flex-direction: column;
  width: 387px;
  margin-left: 8px;
`;
const SideTabs = styled.div`
  display: flex;
  flex: none;
  height: 36px;
  background: #ececec;
`;
const SideTab = styled.span<{ $on?: boolean; $w: number }>`
  width: ${(p) => p.$w}px;
  text-align: center;
  font: ${(p) => (p.$on ? 500 : 400)} 14px/35px ${ui};
  color: ${(p) => (p.$on ? "#333" : "#777")};
  background: ${(p) => (p.$on ? "#fff" : "transparent")};
`;
const InfoArea = styled.div`
  display: flex;
  flex: none;
  height: 389px;
  border: solid #e9ebee;
  border-width: 0 0 1px 1px;
  overflow: hidden;
`;
const InfoList = styled.dl`
  flex: 1;
  margin: 0;
  padding: 4px 0 0 13px;
  font: 12px/16px ${ui};
`;
const Term = styled.dt`
  font-weight: 500;
  color: #161616;
  letter-spacing: -0.1px;
`;
const Value = styled.dd<{ $none?: boolean }>`
  height: ${(p) => (p.$none ? 0 : 16)}px;
  margin: 0 0 12px;
  color: #444;
  letter-spacing: -0.02px;
`;
const info: [string, string | null][] = [
  ["Description", "6mm Flat Endmill"],
  ["Vendor", ""],
  ["Product id", ""],
  ["Product link", null],
  ["Diameter", "6 mm"],
  ["Shaft diameter", "6 mm"],
  ["Overall length", "63 mm"],
  ["Length below holder", "22.5 mm"],
  ["Shoulder length", "20 mm"],
  ["Flute length", "20 mm"],
];
const PreviewBox = styled.div`
  position: relative;
  flex: none;
  height: 380px;
  border-left: 1px solid #e9ebee;
  border-bottom: 1px solid #e9ebee;
`;
const ScaleBadge = styled.div`
  position: absolute;
  right: 12px;
  bottom: 11px;
  display: flex;
  align-items: center;
  gap: 6px;
  width: 61px;
  height: 28px;
  padding-left: 4px;
  background: #fff;
  box-shadow: 0 1px 3px rgba(0, 0, 0, 0.25);
  color: #555;
  letter-spacing: -0.25px;
`;
const Actions = styled.div`
  display: flex;
  gap: 15px;
  padding: 3px 0 0 209px;
`;
const Action = styled.button<{ $primary?: boolean }>`
  width: ${(p) => (p.$primary ? 60 : 63)}px;
  height: ${(p) => (p.$primary ? 22 : 24)}px;
  padding: 0;
  border: 1px solid ${(p) => (p.$primary ? blue : "#b9b9b9")};
  border-radius: 2px;
  background: ${(p) => (p.$primary ? blue : "#fff")};
  color: ${(p) => (p.$primary ? "#fff" : "#333")};
  font: ${(p) => (p.$primary ? 600 : 400)} 12px/18px ${ui};
  letter-spacing: -0.2px;
`;
const Version = styled.div`
  position: absolute;
  left: 0;
  bottom: -2px;
  height: 12px;
  color: #d5d5d5;
  font: 10.5px/12px "Liberation Mono", monospace;
`;

const lines = (from: number, step: number, count: number) => Array.from({ length: count }, (_, i) => from + i * step);

const ToolPreview = () => {
  const step = 46.7;
  return (
    <svg width="386" height="379" viewBox="48 21 1158 1137">
      <defs>
        <linearGradient id="body">
          <stop offset="0" stopColor="#5fa9cf" />
          <stop offset=".12" stopColor="#73d2fd" />
          <stop offset=".36" stopColor="#88faff" />
          <stop offset=".5" stopColor="#82ecff" />
          <stop offset=".64" stopColor="#74d4ff" />
          <stop offset=".82" stopColor="#4f8cab" />
          <stop offset="1" stopColor="#427089" />
        </linearGradient>
        <linearGradient id="nut">
          <stop offset="0" stopColor="#5fa9cf" />
          <stop offset=".15" stopColor="#74d0ff" />
          <stop offset=".32" stopColor="#84f0ff" />
          <stop offset=".5" stopColor="#7fe2ff" />
          <stop offset=".64" stopColor="#74d4ff" />
          <stop offset=".84" stopColor="#4f8cab" />
          <stop offset="1" stopColor="#427089" />
        </linearGradient>
        <linearGradient id="under">
          <stop offset="0" stopColor="#467f9d" />
          <stop offset=".4" stopColor="#5496b5" />
          <stop offset="1" stopColor="#3e6c84" />
        </linearGradient>
        <linearGradient id="foot">
          <stop offset="0" stopColor="#4a829f" />
          <stop offset=".25" stopColor="#396277" />
          <stop offset="1" stopColor="#467f99" />
        </linearGradient>
        <linearGradient id="flute">
          <stop offset="0" stopColor="#f0950f" />
          <stop offset=".3" stopColor="#ffc620" />
          <stop offset=".6" stopColor="#fdb41d" />
          <stop offset="1" stopColor="#9c6410" />
        </linearGradient>
        <linearGradient id="shaft">
          <stop offset="0" stopColor="#8d8d8d" />
          <stop offset=".4" stopColor="#c4c4c4" />
          <stop offset="1" stopColor="#6d6d6d" />
        </linearGradient>
      </defs>
      <rect x="48" y="21" width="1158" height="1140" fill="#fff" />
      <g stroke="#cdeaf7" strokeWidth="3">
        {lines(627 - 12 * step, step, 25).map((x) => (
          <path key={x} d={`M${x} 21V1161`} />
        ))}
        {lines(990 - 20 * step, step, 24).map((y) => (
          <path key={y} d={`M48 ${y}H1206`} />
        ))}
      </g>
      <path d="M160 21V1161M1094 21V1161M48 523H1206M48 56H1206" stroke="#b0def3" strokeWidth="3.500" />
      <path d="M48 990H1206M627 21V1161" stroke="#858585" strokeWidth="5" />
      <rect x="600" y="778" width="55" height="25" fill="url(#shaft)" />
      <rect x="600" y="802" width="55" height="189" fill="url(#flute)" />
      <rect x="420" y="192" width="414" height="32" fill="url(#body)" />
      <path d="M337 222H917L924 229V262L919 265H335L330 262V229Z" fill="url(#body)" />
      <path d="M330 262H924L890 282H365Z" fill="url(#under)" />
      <rect x="365" y="281" width="525" height="30" fill="url(#body)" />
      <path d="M365 309H890L924 328V364L919 369H335L330 364V328Z" fill="url(#body)" />
      <path d="M365 309H890L924 328H330Z" fill="#3f87b3" opacity=".25" />
      <path d="M408 369H846L834 381H420Z" fill="url(#under)" />
      <rect x="420" y="380" width="414" height="104" fill="url(#body)" />
      <path d="M420 483H834L813 504H441Z" fill="url(#under)" />
      <rect x="441" y="503" width="372" height="44" fill="url(#body)" />
      <rect x="393" y="546" width="468" height="199" fill="url(#nut)" />
      <path d="M393 744H861L808 779H449Z" fill="url(#foot)" />
      <circle cx="627" cy="990" r="9" fill="#000" />
    </svg>
  );
};

const SelectToolDialog = () => (
  <Dialog>
    <DialogTitle>
      <FusionLogo />
      <span>Select Tool</span>
      <WindowButtons $pad={17}>
        <Icon w={11} stroke="#bbb" sw={1}><path d="M0 5.500H11" /></Icon>
        <Icon w={11} stroke="#000" sw={1.2}><path d="M.6 .6H10.400V10.400H.6Z" /></Icon>
        <Icon w={11} stroke="#000" sw={1.2}><path d="M.5 .5L10.500 10.500M10.500 .5L.5 10.500" /></Icon>
      </WindowButtons>
    </DialogTitle>
    <DialogBody>
      <Library>
        <LibTools>
          <TNewFolder />
          <TPencil />
          <TDup />
          <TImport />
          <TExport />
          <TRenum />
          <LibSecondRow>
            <TBroom />
            <ToolSep />
            <TTrash />
          </LibSecondRow>
        </LibTools>
        {library.map((r) => (
          <LibRow key={r.t} $x={r.x} $on={r.on} $bold={r.bold} $h={r.h} $drop={r.drop}>
            {r.chev && <ChevronDown />}
            {r.t}
          </LibRow>
        ))}
        <HScroll $w={164} />
      </Library>
      <Center>
        <Search>Search</Search>
        <Card $h={401} $top={7}>
          <CardTools $h={32}>
            <TPlus />
            <TPencil c={blue} />
            <TCopy c={blue} />
            <TPaste />
            <TDup c={blue} />
            <TPrint />
            <TRenum c={blue} />
            <ToolSep />
            <TTrash c={blue} />
            <span className="push"><TFilter /></span>
          </CardTools>
          <HeadRow>
            <Gear />
            <span>Name</span>
            <span>Corner radius</span>
            <Rise>
              Diameter
              <Icon w={10} h={8} stroke="#111" sw={2.2}><path d="M1 1.500L5 5.800L9 1.500" /></Icon>
            </Rise>
            <span>Flute length</span>
            <span>Overall length</span>
            <span>Type</span>
          </HeadRow>
          <ScrollArea>
            <Rows>
              {tools.map((r, i) => (
                <Row key={i} $kind={r.kind}>
                  <Lead>
                    <span>{r.lead}</span>
                    <span>{r.img}</span>
                  </Lead>
                  {r.c.map((c, k) => (
                    <Cell key={k} $tight={c.startsWith("1 -")}>{c}</Cell>
                  ))}
                </Row>
              ))}
            </Rows>
            <VThumb $h={50} />
          </ScrollArea>
          <HScroll $w={688} />
        </Card>
        <Card $h={358} $top={7}>
          <CardTools $h={31}>
            <TPencil c={blue} />
            <ToolSep />
            <TTrash c={blue} />
          </CardTools>
          <DataHead>Cutting data</DataHead>
          <ScrollArea>
            <Rows>
              {cutting.map((c, i) => (
                <DataRow key={c} $on={i === 0}>{c}</DataRow>
              ))}
            </Rows>
            <VThumb $h={112} />
          </ScrollArea>
        </Card>
      </Center>
      <Side>
        <SideTabs>
          <SideTab $w={68}>Filters</SideTab>
          <SideTab $w={52} $on>Info</SideTab>
        </SideTabs>
        <InfoArea>
          <InfoList>
            {info.map(([k, v]) => (
              <React.Fragment key={k}>
                <Term>{k}</Term>
                <Value $none={v === null}>{v}</Value>
              </React.Fragment>
            ))}
          </InfoList>
          <VThumb $h={81} />
        </InfoArea>
        <PreviewBox>
          <ToolPreview />
          <ScaleBadge>
            <Icon w={17} h={8} stroke="#333" sw={1.2}><path d="M.6 0V7.400H16.400V0" /></Icon>
            5 mm
          </ScaleBadge>
        </PreviewBox>
        <Actions>
          <Action $primary>Select</Action>
          <Action>Cancel</Action>
        </Actions>
      </Side>
    </DialogBody>
    <Version>v1.6.0</Version>
  </Dialog>
);

/* ------------------------------------------------------------------ */
/* Taskbar                                                             */
/* ------------------------------------------------------------------ */

const Taskbar = styled.footer`
  display: flex;
  flex: none;
  height: 40px;
  background: linear-gradient(
    90deg, #26291d 0, #33312a 390px, #4b423a 450px, #4a4039 700px, #3d3b38 830px, #353b3c 980px, #223237 1020px,
    #1f3038 1110px, #2c2f33 1200px, #2d2d30 1400px, #2a333a 1480px, #3b3a2a 1530px, #29343c 1600px, #23304c 1650px,
    #2c2c3d 1710px, #2f3a3a 1750px, #3f4530 1800px, #363f2b 1840px, #223230 1920px
  );
  color: #fff;
`;
const Start = styled.span`
  display: grid;
  place-items: center;
  width: 48px;
`;
const SearchBox = styled.div`
  display: flex;
  align-items: center;
  gap: 10px;
  width: 344px;
  padding-left: 12px;
  background: #f2f2f2;
  border: 1px solid #8f8f8f;
  color: #333;
  font: 15px ${segoe};
  letter-spacing: -0.4px;
`;
const TaskItem = styled.span<{ $run?: boolean; $bg?: string; $bar?: string }>`
  display: grid;
  place-items: center;
  flex: none;
  width: 49px;
  background:
    linear-gradient(${(p) => (p.$run ? p.$bar ?? "#7bb8e6" : "transparent")} 0 0) 50% 100% / ${(p) => (p.$bar ? "100%" : "40px")} 2px no-repeat,
    ${(p) => p.$bg ?? "transparent"};
`;
const Tray = styled.div`
  display: flex;
  align-items: center;
  margin-left: auto;
  font: 12px/23px ${segoe};
  letter-spacing: -0.3px;
`;
const TrayIcon = styled.span`
  display: grid;
  place-items: center;
  width: 24.1px;
`;
const Clock = styled.span`
  width: 84px;
  font: 12px/18px ${segoe};
  letter-spacing: -0.45px;
  text-align: center;
`;

const TaskbarView = () => (
  <Taskbar>
    <Start>
      <Icon w={16} fill="#fff">
        <path d="M0 2.300L6.500 1.400V7.500H0ZM7.500 1.200L16 0V7.500H7.500ZM0 8.500H6.500V14.600L0 13.700ZM7.500 8.500H16V16L7.500 14.800Z" />
      </Icon>
    </Start>
    <SearchBox>
      <Icon w={17} stroke="#222" sw={1.5}>
        <circle cx="10.500" cy="6.500" r="5.500" />
        <path d="M6.500 10.500L.5 16.500" />
      </Icon>
      Escribe aquí para buscar
    </SearchBox>
    <TaskItem>
      <Icon w={16}><circle cx="8" cy="8" r="6.900" stroke="#fff" strokeWidth="2" /></Icon>
    </TaskItem>
    <TaskItem>
      <Icon w={16} h={16} stroke="#fff" sw={1.2}>
        <path d="M.6 0V3H10.400V0M.6 5.600H10.400V11H.6ZM.6 16V13.600H10.400V16M13.600 0V16M12.500 6H15.500" />
      </Icon>
    </TaskItem>
    <TaskItem $run>
      <Icon w={21} h={18}>
        <path d="M0 0H8L10 3H21V17H0Z" fill="#e8b12c" />
        <path d="M0 4H21V17H0Z" fill="#fbd667" />
        <path d="M4 9H17V18H13V13H8V18H4Z" fill="#3595dd" />
      </Icon>
    </TaskItem>
    <TaskItem>
      <Icon w={22} h={23}>
        <path d="M6.500 6V4Q7 1 11 1Q15 1 15.500 4V6" stroke="#fff" strokeWidth="1.500" />
        <path d="M0 6H22V23H0Z" fill="#fff" />
        <path d="M6 9H10.500V13.500H6Z" fill="#f25022" /><path d="M11.500 9H16V13.500H11.500Z" fill="#7fba00" />
        <path d="M6 14.500H10.500V19H6Z" fill="#00a4ef" /><path d="M11.500 14.500H16V19H11.500Z" fill="#ffb900" />
      </Icon>
    </TaskItem>
    <TaskItem>
      <Icon w={23}>
        <rect width="23" height="23" rx="7" fill="#3f80f6" />
        <path d="M4.500 8H13Q14.500 8 14.500 9.500V15H6Q4.500 15 4.500 13.500ZM15.500 10L19 8V15L15.500 13Z" fill="#fff" />
      </Icon>
    </TaskItem>
    <TaskItem>
      <Icon w={24}>
        <rect width="24" height="24" fill="#0078d7" />
        <rect x="7" y="7" width="10.500" height="10.500" rx="3" stroke="#fff" strokeWidth="1.200" />
        <circle cx="12.200" cy="12.200" r="2.600" stroke="#fff" strokeWidth="1.200" />
      </Icon>
    </TaskItem>
    <TaskItem>
      <Icon w={24} h={18}>
        <path d="M0 3H7L9 0H15L17 3H24V18H0Z" fill="#7c838b" />
        <circle cx="12" cy="10" r="6.500" fill="#e8ecf3" />
        <circle cx="12" cy="10" r="4.600" fill="#8f6ad8" />
        <path d="M7.500 10A4.600 4.600 0 0 1 16.500 10Z" fill="#4aa5ea" />
        <rect x="2" y="1" width="4" height="2" fill="#2aa4e8" />
      </Icon>
    </TaskItem>
    <TaskItem $run>
      <Icon w={22}>
        <circle cx="11" cy="11" r="11" fill="#fbc116" />
        <path d="M11 11L1.500 5.500A11 11 0 0 1 20.500 5.500H11Z" fill="#e33b2e" />
        <path d="M11 11L1.500 5.500A11 11 0 0 0 10 22L15 13Z" fill="#2da94f" />
        <circle cx="11" cy="11" r="5" fill="#fff" />
        <circle cx="11" cy="11" r="4" fill="#4285f4" />
      </Icon>
    </TaskItem>
    <TaskItem $run>
      <Icon w={22} stroke="#111" sw={2}>
        <circle cx="11" cy="11" r="11" fill="#1ed760" stroke="none" />
        <path d="M4.500 8Q11 5.500 18 9M5.500 11.500Q11 9.500 16.500 12.500M6.500 14.800Q11 13 15.500 15.700" strokeLinecap="round" />
      </Icon>
    </TaskItem>
    <TaskItem $run $bg="rgba(255,255,255,.22)">
      <FusionLogo size={23} />
    </TaskItem>
    <TaskItem $run $bar="#ff7a00" $bg="#b06d2e">
      <Icon w={22}>
        <circle cx="11" cy="11" r="11" fill="#10549f" />
        <path d="M1 15A11 11 0 1 1 21 15L14 6Q11 3 8 6Z" fill="#2b7fd0" />
        <path d="M4 19Q5 12 11 6.500Q17 12 18 19L14 15L12.500 16.500L11 14L9.500 16.500L8 15Z" fill="#fff" />
      </Icon>
    </TaskItem>
    <TaskItem $run>
      <Icon w={22}>
        <path d="M16 0L22 3V19L16 22L1 8.500L3.500 6L16 15.500Z" fill="#1f8fd8" />
        <path d="M16 0L22 3V19L16 22V6.500L3.500 16L1 13.500Z" fill="#2eaaf0" />
      </Icon>
    </TaskItem>
    <TaskItem $run>
      <Icon w={22} h={19}>
        <rect width="22" height="19" fill="#0a0a0a" stroke="#999" />
        <path d="M0 0H22V3H0Z" fill="#bbb" />
        <text x="2" y="10" fontFamily="Liberation Mono" fontSize="5.500" fontWeight="700" fill="#fff">C:\_</text>
      </Icon>
    </TaskItem>
    <TaskItem $run>
      <Icon w={22}>
        <path d="M6 1H20V21H6Z" fill="#fff" />
        <path d="M0 2L14 0V22L0 20Z" fill="#2a5db4" />
        <path d="M2.500 7L4.500 15L7 8L9.500 15L11.500 7" stroke="#fff" strokeWidth="1.700" />
        <path d="M15 6H19M15 10H19M15 14H19M15 18H19" stroke="#7ca6dc" />
      </Icon>
    </TaskItem>
    <TaskItem $run>
      <Icon w={22} h={21}>
        <path d="M0 0H22V21H0Z" fill="#2ba3ef" />
        <path d="M0 21V14L9 5L22 20V21Z" fill="#174f96" />
        <path d="M9 5L22 20V21H4Z" fill="#1d66ba" opacity=".7" />
        <circle cx="16" cy="5" r="1.800" fill="#fff" />
      </Icon>
    </TaskItem>
    <Tray>
      <TrayIcon><Icon w={11} h={7} stroke="#fff" sw={1.3}><path d="M.5 6L5.500 1L10.500 6" /></Icon></TrayIcon>
      <TrayIcon>
        <Icon w={16} h={14} fill="#a7aaac">
          <path d="M4 0L8 2.500L4 5L0 2.500ZM12 0L16 2.500L12 5L8 2.500ZM4 5L8 7.500L4 10L0 7.500ZM12 5L16 7.500L12 10L8 7.500ZM8 8.500L12 11L8 13.500L4 11Z" />
        </Icon>
      </TrayIcon>
      <TrayIcon>
        <Icon w={16} h={14}>
          <path d="M3 12Q0 11 1 8Q2 6 4 6Q5 2 9 3Q12 4 12 7Q16 7 15 11L13 12Z" fill="#8f9698" />
          <path d="M1 1L15 14" stroke="#eee" strokeWidth="1.300" />
        </Icon>
      </TrayIcon>
      <TrayIcon>
        <Icon w={16}>
          <rect width="16" height="16" rx="2" fill="#0e73d8" />
          <circle cx="8" cy="8" r="6.500" fill="#fff" />
          <path d="M2.500 8L5.500 5.500V7.200H10.500V5.500L13.500 8L10.500 10.500V8.800H5.500V10.500Z" fill="#0e73d8" />
        </Icon>
      </TrayIcon>
      <TrayIcon>
        <Icon w={16}>
          <path d="M2 1Q12 3 14 12Q7 13 3 7Z" fill="#111" stroke="#ddd" />
          <path d="M8 14H15M3 3L10 8" stroke="#ddd" strokeWidth="1.500" />
        </Icon>
      </TrayIcon>
      <TrayIcon>
        <Icon w={16} h={16}>
          <path d="M7 0L14 2V7Q13 12 7 15Q1 12 0 7V2Z" fill="#fff" />
          <path d="M7 1V14M1 6.500H13" stroke="#222" strokeWidth="1.500" />
          <circle cx="11.500" cy="11.500" r="4.300" fill="#17a34a" />
          <path d="M9.500 11.500L11 13L13.500 10" stroke="#fff" strokeWidth="1.200" />
        </Icon>
      </TrayIcon>
      <TrayIcon>
        <Icon w={13} h={17} stroke="#fff" sw={1.1}><path d="M1 5H8V16H1ZM2.500 5V1H6.500V5M10 16Q13 15 11 11" /></Icon>
      </TrayIcon>
      <TrayIcon>
        <Icon w={12} h={16}>
          <ellipse cx="6" cy="8" rx="6" ry="8" fill="#0a84e6" />
          <path d="M3 5L9 11L6 13.500V2.500L9 5L3 11" stroke="#fff" strokeWidth="1.200" />
        </Icon>
      </TrayIcon>
      <TrayIcon>
        <Icon w={16} h={16}>
          <rect x=".5" y=".5" width="15" height="15" rx="2" fill="#111" stroke="#555" />
          <path d="M1 8Q6 2 14 5V12Q6 15 1 8Z" fill="#76b900" />
          <circle cx="8" cy="8.500" r="2.500" stroke="#111" />
        </Icon>
      </TrayIcon>
      <TrayIcon>
        <Icon w={17} h={14} stroke="#fff" sw={1.1}><path d="M1 5H3.500L7 1.500V12.500L3.500 9H1ZM9 5Q10.500 7 9 9M11 3Q14 7 11 11M13 1.500Q17 7 13 12.500" /></Icon>
      </TrayIcon>
      <TrayIcon>
        <Icon w={14} h={14} stroke="#ddd" sw={1.2}><path d="M1 14Q1 1 14 1M4.500 14Q4.500 5 14 4.500M8 14Q8 8.500 14 8M11 14Q11 11.500 14 11" /></Icon>
      </TrayIcon>
      <Spacer $w={7} />
      ESP
      <Spacer $w={2} />
      <Clock>
        10:01
        <br />
        21/07/2020
      </Clock>
      <Spacer $w={3} />
      <Icon w={26} h={26}>
        <path d="M1 3H17V16H9L5 19V16H1Z" fill="#fff" />
        <path d="M4 7H14M4 10H14M4 13H12" stroke="#333" />
        <circle cx="17" cy="17" r="7.700" fill="#3c4141" stroke="#aaa" />
        <text x="17" y="21.500" textAnchor="middle" fontFamily={segoe} fontSize="12" fill="#fff">1</text>
      </Icon>
      <Spacer $w={17} />
    </Tray>
  </Taskbar>
);

/* ------------------------------------------------------------------ */

export default function App() {
  return (
    <Screen>
      <Global />
      <TitleBar>
        <FusionLogo />
        <AppTitle>Autodesk Fusion 360 (Education License)</AppTitle>
        <WindowButtons $pad={20}>
          <Icon w={11} stroke="#888" sw={1}><path d="M0 5.500H11" /></Icon>
          <Icon w={11} stroke="#888" sw={1}><path d="M.5 2.500H8V10.500H.5ZM2.500 2.500V.5H10.500V8.500H8" /></Icon>
          <Icon w={11} stroke="#888" sw={1}><path d="M.5 .5L10.500 10.500M10.500 .5L.5 10.500" /></Icon>
        </WindowButtons>
      </TitleBar>
      <TabStrip>
        <QuickTools>
          <GridDots />
          <Spacer $w={19} />
          <FileIcon />
          <Spacer $w={5} />
          <Caret c="#666" />
          <Spacer $w={19} />
          <SaveIcon />
          <Spacer $w={19} />
          <UndoIcon c="#666" />
          <Spacer $w={8} />
          <Caret c="#666" />
          <Spacer $w={13} />
          <UndoIcon c="#999" flip />
          <Spacer $w={7} />
          <Caret c="#999" />
        </QuickTools>
        <DocTab>
          <CubeDoc />
          <span>silla fresa v4*</span>
          <Icon w={10} stroke="#777" sw={1.6}><path d="M1 1L9 9M9 1L1 9" /></Icon>
        </DocTab>
        <NewTab>
          <Icon w={13} stroke="#666" sw={2.4}><path d="M0 6.500H13M6.500 0V13" /></Icon>
        </NewTab>
        <AccountTools>
          <span>
            <Icon w={16} h={15}>
              <path d="M0 0H16V11H14V15L9 11H0Z" fill="#5c5c5c" />
              <path d="M3 3H13M3 5.500H13M3 8H10" stroke="#cbcbcb" />
            </Icon>
          </span>
          <span>
            <Icon w={16} h={16}>
              <circle cx="8" cy="8" r="8" fill="#5c5c5c" />
              <path d="M4.500 12L8.500 7.500" stroke="#d6d6d6" strokeWidth="2.400" strokeLinecap="round" />
              <path d="M11.800 3.600A3 3 0 1 0 12.600 6.500L10.300 6.600L9.800 5Z" fill="#d6d6d6" />
            </Icon>
          </span>
          <span>
            <Icon w={16} h={16}>
              <circle cx="8" cy="8" r="7.300" stroke="#5c5c5c" strokeWidth="1.200" />
              <circle cx="8" cy="8" r="5.800" fill="#5c5c5c" />
              <path d="M8 4V8.500H12" stroke="#d6d6d6" strokeWidth="1.400" />
            </Icon>
          </span>
          <span>
            <Icon w={16} h={16}>
              <circle cx="8" cy="8" r="8" fill="#5c5c5c" />
              <text x="8" y="12.500" textAnchor="middle" fontFamily={classic} fontSize="12.500" fontWeight="700" fill="#d8d8d8">?</text>
            </Icon>
          </span>
          <Avatar>IC</Avatar>
        </AccountTools>
      </TabStrip>
      <Ribbon>
        <Workspace>
          MANUFACTURE
          <Caret c="#333" s={6} />
        </Workspace>
        <RibbonBody>
          <RibbonTabs>
            <RibbonTab $w={64} $on>MILLING</RibbonTab>
            <Spacer $w={21} />
            <RibbonTab $w={66}>TURNING</RibbonTab>
            <Spacer $w={20} />
            <RibbonTab $w={72}>ADDITIVE</RibbonTab>
            <Spacer $w={20} />
            <RibbonTab $w={72}>PROBING</RibbonTab>
            <Spacer $w={20} />
            <RibbonTab $w={96}>FABRICATION</RibbonTab>
            <Spacer $w={20} />
            <RibbonTab $w={68}>UTILITIES</RibbonTab>
          </RibbonTabs>
          <RibbonGroups>
            <RibbonGroup $w={72} $gap={13}>
              <RibbonIcons>
                <SetupFolder />
                <PostIcon />
              </RibbonIcons>
              <RibbonLabel>SETUP <Caret c="#333" s={6} /></RibbonLabel>
            </RibbonGroup>
            <RibbonRule />
            <RibbonGroup $w={75} $gap={11}>
              <RibbonIcons>
                <Adaptive2D />
                <Pocket2D />
              </RibbonIcons>
              <RibbonLabel><Spacer $w={33} />2D <Caret c="#333" s={6} /></RibbonLabel>
            </RibbonGroup>
          </RibbonGroups>
        </RibbonBody>
      </Ribbon>
      <Viewport>
        <Photo />
        <RedAxis />
        <FloatBar $x={4} $y={4} $w={300} $h={25}>
          <Spacer $w={4} />
          <Icon w={10} h={8} fill="#333"><path d="M5 1L0 4L5 7ZM10 1L5 4L10 7Z" /></Icon>
          <Spacer $w={10} />
          <BarLabel $ls={-0.65}>BROWSER</BarLabel>
          <Icon w={10}><circle cx="5" cy="5" r="5" fill="#333" /></Icon>
          <Spacer $w={10} />
        </FloatBar>
        <BrowserTree />
        <ViewCube />
        <OperationPanel />
        <FloatBar $x={4} $y={873} $w={300}>
          <Spacer $w={24} />
          <BarLabel $ls={-0.9}>COMMENTS</BarLabel>
          <Icon w={10}>
            <circle cx="5" cy="5" r="4.800" fill="#333" />
            <path d="M2.500 5H7.500M5 2.500V7.500" stroke="#fff" strokeWidth="1.300" />
          </Icon>
          <Spacer $w={7} />
          <Icon w={4} h={12} stroke="#888" sw={1}><path d="M.5 0V12M2.500 3V9" /></Icon>
        </FloatBar>
        <NavBar />
      </Viewport>
      <TaskbarView />
      <SelectToolDialog />
    </Screen>
  );
}
